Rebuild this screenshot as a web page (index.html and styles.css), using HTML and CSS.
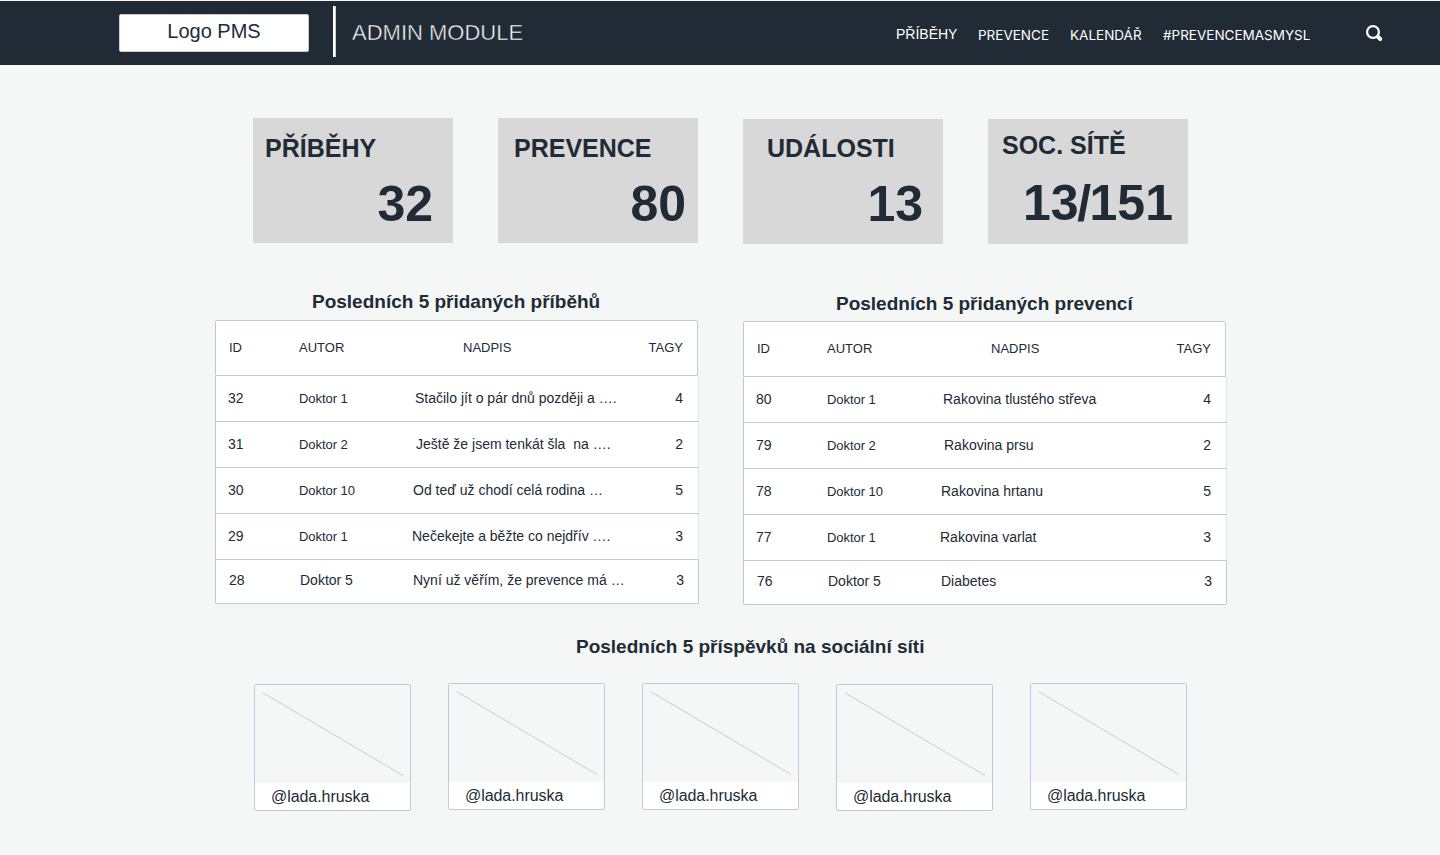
FILE: index.html
```html
<!DOCTYPE html>
<html lang="cs">
<head>
<meta charset="utf-8">
<title>Admin module</title>
<link rel="stylesheet" href="styles.css">
</head>
<body>
<header class="topbar">
  <div class="logo">Logo PMS</div>
  <div class="divider"></div>
  <div class="module">ADMIN MODULE</div>
  <nav class="nav">
    <a class="nav-active">PŘÍBĚHY</a>
    <a class="nav-prevence">PREVENCE</a>
    <a class="nav-kalendar">KALENDÁŘ</a>
    <a class="nav-hash">#PREVENCEMASMYSL</a>
  </nav>
  <svg class="search" width="18" height="18" viewBox="0 0 18 18" fill="none" stroke="#fff" stroke-linecap="round">
    <circle cx="7" cy="7" r="5.9" stroke-width="2.2"/>
    <path d="M12 11.8L14.2 14" stroke-width="4"/>
  </svg>
</header>
<main>
  <section class="stats">
    <div class="stat stat-stories"><h2>PŘÍBĚHY</h2><p>32</p></div>
    <div class="stat stat-prevention"><h2>PREVENCE</h2><p>80</p></div>
    <div class="stat stat-events"><h2>UDÁLOSTI</h2><p>13</p></div>
    <div class="stat stat-social"><h2>SOC. SÍTĚ</h2><p>1<span class="tight">3/</span>151</p></div>
  </section>
  <section class="tables">
    <div class="panel">
      <h3>Posledních 5 přidaných příběhů</h3>
      <div class="row head"><span>ID</span><span>AUTOR</span><span class="title">NADPIS</span><span class="tags">TAGY</span></div>
      <div class="row"><span>32</span><span class="author">Doktor 1</span><span class="title t1">Stačilo jít o pár dnů později a ….</span><span class="tags">4</span></div>
      <div class="row"><span>31</span><span class="author">Doktor 2</span><span class="title t2">Ještě že jsem tenkát šla&nbsp; na ….</span><span class="tags">2</span></div>
      <div class="row"><span>30</span><span class="author">Doktor 10</span><span class="title t3">Od teď už chodí celá rodina …</span><span class="tags">5</span></div>
      <div class="row"><span>29</span><span class="author">Doktor 1</span><span class="title t4">Nečekejte a běžte co nejdřív ….</span><span class="tags">3</span></div>
      <div class="row last"><span>28</span><span class="author-last">Doktor 5</span><span class="title t5">Nyní už věřím, že prevence má …</span><span class="tags">3</span></div>
    </div>
    <div class="panel panel-right">
      <h3>Posledních 5 přidaných prevencí</h3>
      <div class="row head"><span>ID</span><span>AUTOR</span><span class="title">NADPIS</span><span class="tags">TAGY</span></div>
      <div class="row"><span>80</span><span class="author">Doktor 1</span><span class="title t1">Rakovina tlustého střeva</span><span class="tags">4</span></div>
      <div class="row"><span>79</span><span class="author">Doktor 2</span><span class="title t2">Rakovina prsu</span><span class="tags">2</span></div>
      <div class="row"><span>78</span><span class="author">Doktor 10</span><span class="title t3">Rakovina hrtanu</span><span class="tags">5</span></div>
      <div class="row"><span>77</span><span class="author">Doktor 1</span><span class="title t4">Rakovina varlat</span><span class="tags">3</span></div>
      <div class="row last"><span>76</span><span class="author-last">Doktor 5</span><span class="title t5">Diabetes</span><span class="tags">3</span></div>
    </div>
  </section>
  <section class="social">
    <h3>Posledních 5 příspěvků na sociální síti</h3>
    <div class="posts">
      <article class="post low"><svg class="media" viewBox="0 0 155 98"><path d="M7.5 7.5L148 90.5"/></svg><p>@lada.hruska</p></article>
      <article class="post"><svg class="media" viewBox="0 0 155 98"><path d="M7.5 7.5L148 90.5"/></svg><p>@lada.hruska</p></article>
      <article class="post"><svg class="media" viewBox="0 0 155 98"><path d="M7.5 7.5L148 90.5"/></svg><p>@lada.hruska</p></article>
      <article class="post low"><svg class="media" viewBox="0 0 155 98"><path d="M7.5 7.5L148 90.5"/></svg><p>@lada.hruska</p></article>
      <article class="post"><svg class="media" viewBox="0 0 155 98"><path d="M7.5 7.5L148 90.5"/></svg><p>@lada.hruska</p></article>
    </div>
  </section>
</main>
</body>
</html>
```
FILE: styles.css
```css
* { box-sizing: border-box; }
body {
  margin: 0;
  height: 855px;
  overflow: hidden;
  background: #f4f7f6;
  color: #212b35;
  font-family: "Liberation Sans", Arial, sans-serif;
}
h2, h3, p { margin: 0; white-space: nowrap; }

.topbar {
  display: flex;
  align-items: flex-start;
  height: 65px;
  border-top: 1px solid #f4f7f6;
  background: #212b35;
  color: #fff;
}
.logo {
  width: 190px;
  height: 38px;
  margin: 13px 0 0 119px;
  border: 1px solid #c4cdd9;
  border-radius: 2px;
  background: #fff;
  color: #212b35;
  font-size: 20px;
  line-height: 32px;
  text-align: center;
}
.divider { width: 3px; height: 51px; margin: 5px 0 0 24px; background: #fff; border: solid #c4cdd5; border-width: 0 1px 0 0; }
.module {
  width: 190px;
  margin: 18px 0 0 16px;
  font-size: 22px;
  line-height: 28px;
  -webkit-text-stroke: 0.5px #212b35;
  white-space: nowrap;
}
.nav { display: flex; margin: 24px 0 0 354px; width: 470px; font: 13.5px/20px Inter, sans-serif; white-space: nowrap; }
.nav-active { width: 82px; margin-top: -1px; font: 14px/20px "Liberation Sans", Arial, sans-serif; }
.nav-prevence { width: 92px; }
.nav-kalendar { width: 93px; }
.search { margin-top: 24px; }

.stats { display: flex; gap: 45px; padding: 53px 0 0 253px; }
.stat { width: 200px; height: 125px; padding: 15px 13px 0; background: #d8d8d8; }
.stat h2 { font-size: 25px; line-height: 30px; }
.stat p { font-size: 50px; font-weight: 700; line-height: 56px; margin-top: 13px; text-align: right; }
.stat-stories { padding-left: 12px; padding-right: 20px; }
.stat-prevention { padding-left: 16px; padding-right: 12px; }
.stat-events { margin-top: 1px; padding: 14px 20px 0 24px; }
.stat-social { margin-top: 1px; padding: 11px 15px 0 14px; }
.stat-social p { margin-top: 15px; }
.tight { letter-spacing: -1.5px; }

.tables { display: flex; gap: 44px; padding: 46px 0 0 215px; }
.panel { width: 484px; }
.panel h3 { height: 30px; padding-left: 97px; }
h3 { font-size: 19px; line-height: 24px; }
.panel-right h3 { height: 31px; padding: 2px 0 0 93px; }
.row {
  display: grid;
  grid-template-columns: 70px 112px 1fr auto;
  align-items: center;
  height: 46px;
  padding: 0 15px 1px 12px;
  border: 1px solid #dfe4ea;
  border-left-color: #c0cad6;
  border-bottom-color: #c0cad6;
  border-top: 0;
  background: #fff;
  font-size: 14px;
  line-height: 16px;
  white-space: pre;
}
.head { width: 483px; height: 56px; padding: 0 14px 0 13px; border: 1px solid #c0cad6; border-radius: 2px 2px 0 0; font-size: 13px; }
.head .title { padding-left: 52px; }
.author { font-size: 13px; padding: 2px 0 0 1px; letter-spacing: -0.05px; }
.author-last { padding-left: 1px; }
.last { height: 44px; padding: 0 14px 3px 13px; border-right-color: #c0cad6; border-radius: 0 0 2px 2px; }
.t1 { padding-left: 5px; }
.t2 { padding-left: 6px; }
.t3 { padding-left: 3px; }
.t4 { padding-left: 2px; }
.t5 { padding-left: 2px; }

.social h3 { padding: 30px 0 0 576px; height: 78px; }
.posts { display: flex; gap: 37px; padding-left: 254px; }
.post { width: 157px; height: 127px; border: 1px solid #c0cad9; border-radius: 2px; background: #fff; }
.low { margin-top: 1px; }
.media { display: block; width: 155px; height: 98px; background: #f4f7f6; fill: none; stroke: #c6cdd7; stroke-width: 1; }
.post p { padding-left: 16px; font-size: 16px; line-height: 27px; letter-spacing: -0.06px; }
```
